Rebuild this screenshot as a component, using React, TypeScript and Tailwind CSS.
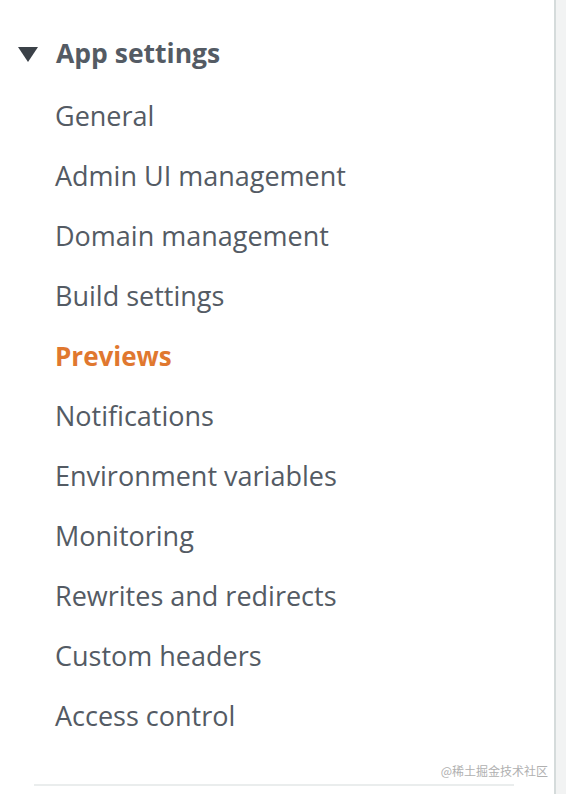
export default function App() {
  const items = [
    "General",
    "Admin UI management",
    "Domain management",
    "Build settings",
    "Previews",
    "Notifications",
    "Environment variables",
    "Monitoring",
    "Rewrites and redirects",
    "Custom headers",
    "Access control",
  ];
  return (
    <div
      className="flex h-[794px] w-[566px] bg-white"
      style={{ fontFamily: '"Open Sans", "Noto Sans", sans-serif' }}
    >
      <div className="relative flex-1">
        <div className="flex h-[54px] items-end pl-[18px]">
          <div className="flex items-center gap-[18px] translate-y-[20px]">
            <svg width="20" height="15" viewBox="0 0 20 15">
              <polygon points="0,0 20,0 10,15" fill="#3b4148" />
            </svg>
            <span className="text-[26.5px] font-bold text-[#545b64]">App settings</span>
          </div>
        </div>
        <ul className="mt-[32px] flex flex-col pl-[55px]">
          {items.map((it) => (
            <li
              key={it}
              className={
                "flex h-[60px] items-center " +
                (it === "Previews" ? "text-[26px] font-bold text-[#e0782f]" : "text-[27px] text-[#545b64]")
              }
            >
              {it}
            </li>
          ))}
        </ul>
        <div className="absolute bottom-[14px] right-[6px] text-[12px] text-[#b0b0b0]" style={{ fontFamily: '"Noto Sans CJK SC", sans-serif' }}>
          @稀土掘金技术社区
        </div>
        <div className="absolute bottom-[8px] left-[34px] h-[2px] w-[480px] bg-[#eaeded]" />
      </div>
      <div className="w-[2px] bg-[#d5dbdb]" />
      <div className="w-[10px] bg-[#f2f3f3]" />
    </div>
  );
}
